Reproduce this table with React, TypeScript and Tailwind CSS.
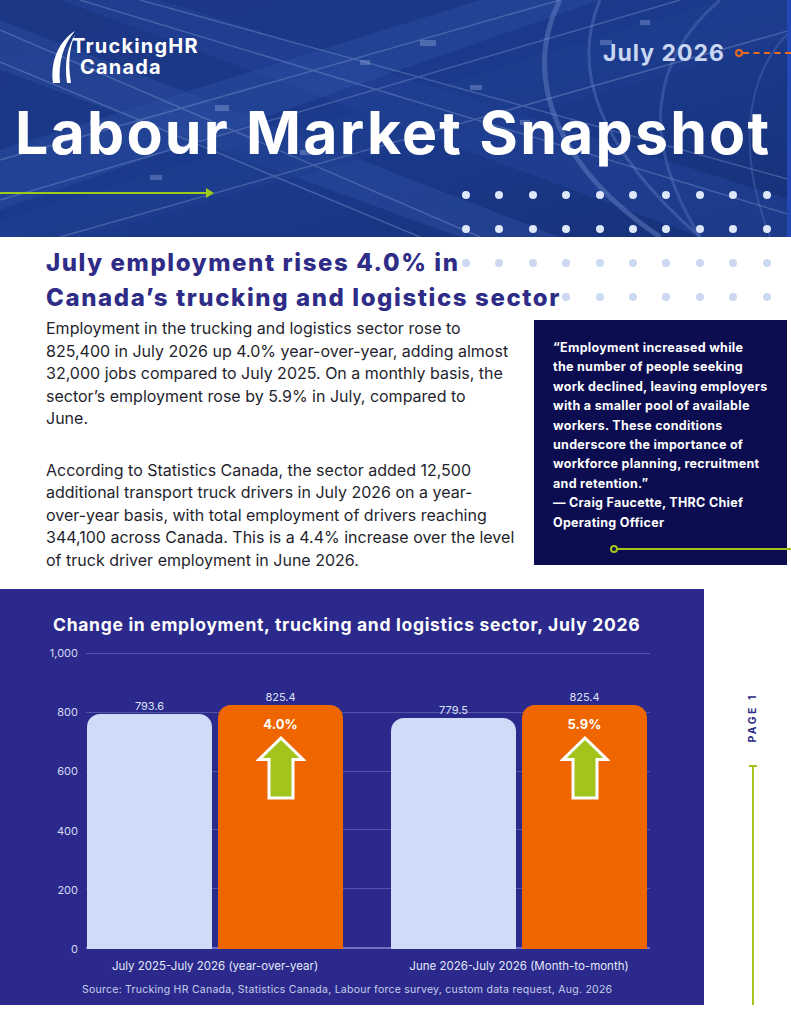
const bars = [
  { label: 'July 2025-July 2026 (year-over-year)', prev: 793.6, curr: 825.4, pct: '4.0%' },
  { label: 'June 2026-July 2026 (Month-to-month)', prev: 779.5, curr: 825.4, pct: '5.9%' },
]

const ticks = ['1,000', '800', '600', '400', '200', '0']
const plotH = 296

function HeaderBackdrop() {
  return (
    <svg className="absolute inset-0 h-full w-full" viewBox="0 0 791 237" preserveAspectRatio="none">
      <defs>
        <linearGradient id="hb" x1="0" y1="0" x2="1" y2="1">
          <stop offset="0" stopColor="#1c3682" />
          <stop offset="0.5" stopColor="#1a3a8c" />
          <stop offset="1" stopColor="#173178" />
        </linearGradient>
      </defs>
      <rect width="791" height="237" fill="url(#hb)" />
      {/* highway going down-right */}
      <polygon points="0,20 0,70 460,237 560,237" fill="#2a4a9c" opacity="0.55" />
      <polygon points="60,0 160,0 791,200 791,237 700,237" fill="#24449a" opacity="0.5" />
      {/* highway going up-right */}
      <polygon points="0,150 0,210 600,0 480,0" fill="#2c4fa2" opacity="0.45" />
      <polygon points="0,220 0,237 80,237 791,40 791,0 720,0" fill="#1e3d8e" opacity="0.6" />
      {/* ramps on right */}
      <path d="M560 0 C 520 80 560 170 660 237" stroke="#6a86c8" strokeWidth="5" fill="none" opacity="0.45" />
      <path d="M600 0 C 570 70 600 150 700 237" stroke="#6a86c8" strokeWidth="3" fill="none" opacity="0.35" />
      <path d="M720 0 C 650 60 640 140 700 237" stroke="#5b78bc" strokeWidth="3" fill="none" opacity="0.4" />
      <path d="M791 30 C 740 80 740 160 770 237" stroke="#5b78bc" strokeWidth="2" fill="none" opacity="0.35" />
      <g stroke="#8aa2d6" strokeWidth="1.5" opacity="0.35">
        <line x1="0" y1="30" x2="480" y2="237" />
        <line x1="0" y1="62" x2="420" y2="237" />
        <line x1="80" y1="0" x2="791" y2="215" />
        <line x1="140" y1="0" x2="791" y2="180" />
        <line x1="0" y1="160" x2="560" y2="0" />
        <line x1="0" y1="200" x2="680" y2="0" />
        <line x1="60" y1="237" x2="791" y2="30" />
      </g>
      <g fill="#9fb4e2" opacity="0.35">
        <rect x="215" y="105" width="14" height="6" />
        <rect x="300" y="150" width="10" height="5" />
        <rect x="420" y="40" width="16" height="6" />
        <rect x="470" y="85" width="12" height="5" />
        <rect x="360" y="60" width="10" height="5" />
        <rect x="520" y="120" width="10" height="5" />
        <rect x="150" y="175" width="12" height="5" />
        <rect x="90" y="120" width="10" height="5" />
        <rect x="600" y="40" width="12" height="5" />
        <rect x="640" y="20" width="10" height="5" />
      </g>
      <rect x="787" y="0" width="4" height="237" fill="#2448b4" />
    </svg>
  )
}

function Logo() {
  return (
    <div className="flex items-start">
      <svg width="30" height="54" viewBox="0 0 30 54" className="mt-[1px]">
        <path d="M27 1 C 12 10 2 30 5 53 L 12 53 C 10 33 15 15 27 1 Z" fill="#ffffff" />
        <path d="M27 5 C 20 16 16 32 19 53 L 23 53 C 20 34 21 19 27 5 Z" fill="#ffffff" />
      </svg>
      <div className="ml-[-6px] mt-[9px] flex flex-col gap-[5px] text-white font-bold">
        <span className="text-[20px] leading-[16px] tracking-[1.2px]">TruckingHR</span>
        <span className="ml-[8px] text-[20px] leading-[16px] tracking-[1.2px]">Canada</span>
      </div>
    </div>
  )
}

function UpArrow() {
  return (
    <svg width="50" height="64" viewBox="0 0 50 64">
      <polygon
        points="25,2 47,23.5 37,23.5 37,62 13,62 13,23.5 3,23.5"
        fill="#a3c41a"
        stroke="#ffffff"
        strokeWidth="3"
        strokeLinejoin="miter"
      />
    </svg>
  )
}

function Dots() {
  const cols = Array.from({ length: 10 })
  return (
    <div className="pointer-events-none absolute left-[462px] top-[191px] flex flex-col gap-y-[26px]">
      {[0, 1, 2, 3].map((row) => (
        <div key={row} className="flex gap-x-[25.4px]">
          {cols.map((_, i) => (
            <span
              key={i}
              className={
                row < 2
                  ? 'h-[8px] w-[8px] rounded-full bg-[#dfe7fb]'
                  : row === 3 && i < 3
                    ? 'h-[8px] w-[8px] rounded-full bg-transparent'
                    : 'h-[8px] w-[8px] rounded-full bg-[#cdd8f2]'
              }
            />
          ))}
        </div>
      ))}
    </div>
  )
}

function Chart() {
  return (
    <div className="h-[416px] w-[704px] bg-[#2b2a8c] pt-[24px]">
      <h2 className="pl-[53px] text-[17.5px] font-bold leading-[24px] tracking-[0.7px] text-white">
        Change in employment, trucking and logistics sector, July 2026
      </h2>

      <div className="mt-[16px] flex">
        <div className="-mt-[7px] flex h-[310px] w-[78px] flex-col items-end justify-between text-[11px] leading-[14px] text-[#d3d9f1]">
          {ticks.map((t) => (
            <span key={t}>{t}</span>
          ))}
        </div>

        <div className="relative ml-[8px] h-[296px] w-[564px]">
          <div className="flex h-full flex-col justify-between">
            {ticks.map((t, i) => (
              <div key={t} className={i === ticks.length - 1 ? 'h-[2px] bg-[#6f70c2]' : 'h-[1px] bg-[#5152a8]'} />
            ))}
          </div>

          <div className="absolute inset-0 flex items-end gap-[48px] pl-[1px]">
            {bars.map((b) => (
              <div key={b.label} className="flex items-end gap-[6px]">
                <div className="flex w-[125px] flex-col items-center">
                  <span className="mb-[1px] text-[11px] leading-[13px] text-[#dce2f6]">{b.prev}</span>
                  <div className="w-full rounded-t-[13px] bg-[#cfdcf7]" style={{ height: (b.prev / 1000) * plotH }} />
                </div>
                <div className="flex w-[125px] flex-col items-center">
                  <span className="mb-[1px] text-[11px] leading-[13px] text-[#dce2f6]">{b.curr}</span>
                  <div
                    className="flex w-full flex-col items-center rounded-t-[13px] bg-[#ef6600] pt-[11px]"
                    style={{ height: (b.curr / 1000) * plotH }}
                  >
                    <span className="text-[13px] font-bold leading-[16px] text-white">{b.pct}</span>
                    <div className="mt-[4px]">
                      <UpArrow />
                    </div>
                  </div>
                </div>
              </div>
            ))}
          </div>
        </div>
      </div>

      <div className="mt-[3px] flex gap-[48px] pl-[87px]">
        {bars.map((b) => (
          <span key={b.label} className="w-[256px] text-center text-[11.5px] leading-[14px] text-[#e3e8f8]">
            {b.label}
          </span>
        ))}
      </div>

      <p className="mt-[11px] pl-[82px] text-[10.5px] leading-[12px] tracking-[0.25px] text-[#c7cdea]">
        Source: Trucking HR Canada, Statistics Canada, Labour force survey, custom data request, Aug. 2026
      </p>
    </div>
  )
}

export default function App() {
  return (
    <div className="relative h-[1024px] w-[791px] overflow-hidden bg-white font-['Inter','Liberation_Sans',sans-serif]">
      <header className="relative h-[237px] overflow-hidden">
        <HeaderBackdrop />
        <div className="relative flex h-full flex-col">
          <div className="flex items-start justify-between pl-[48px] pt-[29px]">
            <Logo />
            <div className="mt-[10px] flex items-center">
              <span className="text-[23px] font-bold leading-[28px] tracking-[1px] text-[#c9d7f2]">July 2026</span>
              <span className="ml-[10px] h-[8px] w-[8px] rounded-full border-[2px] border-[#ec6a1e]" />
              <span className="w-[48px] border-t-[2px] border-dashed border-[#ec6a1e]" />
            </div>
          </div>
          <h1 className="mt-[17px] pl-[15px] text-[59px] font-bold leading-[64px] tracking-[2.2px] text-white">
            Labour Market Snapshot
          </h1>
          <div className="mt-[23px] flex w-[214px] items-center">
            <div className="h-[2.5px] flex-1 bg-[#9ccb1c]" />
            <svg width="8" height="10" viewBox="0 0 8 10" className="-ml-[1px]">
              <polygon points="0,0 8,5 0,10" fill="#9ccb1c" />
            </svg>
          </div>
        </div>
      </header>

      <Dots />

      <section className="relative h-[352px] pl-[46px] pt-[8px]">
        <h2 className="text-[24px] font-extrabold leading-[35px] tracking-[1.6px] text-[#2e2c86]">
          July employment rises 4.0% in
          <br />
          Canada’s trucking and logistics sector
        </h2>

        <div className="mt-[2px] flex">
          <div className="w-[488px] text-[16px] leading-[22.5px] text-[#1f1f2e]">
            <p>
              Employment in the trucking and logistics sector rose to
              <br />
              825,400 in July 2026 up 4.0% year-over-year, adding almost
              <br />
              32,000 jobs compared to July 2025. On a monthly basis, the
              <br />
              sector’s employment rose by 5.9% in July, compared to
              <br />
              June.
            </p>
            <p className="mt-[29px]">
              According to Statistics Canada, the sector added 12,500
              <br />
              additional transport truck drivers in July 2026 on a year-
              <br />
              over-year basis, with total employment of drivers reaching
              <br />
              344,100 across Canada. This is a 4.4% increase over the level
              <br />
              of truck driver employment in June 2026.
            </p>
          </div>

          <div className="relative mt-[3px] h-[245px] w-[253px] bg-[#0c0d50] pl-[19px] pt-[18px]">
            <p className="text-[12.5px] font-bold leading-[19.4px] tracking-[0.3px] text-white">
              “Employment increased while
              <br />
              the number of people seeking
              <br />
              work declined, leaving employers
              <br />
              with a smaller pool of available
              <br />
              workers. These conditions
              <br />
              underscore the importance of
              <br />
              workforce planning, recruitment
              <br />
              and retention.”
              <br />
              — Craig Faucette, THRC Chief
              <br />
              Operating Officer
            </p>
            <div className="absolute left-[76px] right-[-4px] top-[225px] flex items-center">
              <span className="h-[8px] w-[8px] rounded-full border-[2px] border-[#a3c41a]" />
              <span className="h-[2px] flex-1 bg-[#a3c41a]" />
            </div>
          </div>
        </div>
      </section>

      <div className="flex">
        <Chart />
        <div className="flex flex-1 flex-col items-center pl-[10px]">
          <span className="mt-[104px] rotate-180 text-[10.5px] font-bold tracking-[2.5px] text-[#2e2c86] [writing-mode:vertical-rl]">
            PAGE 1
          </span>
          <div className="mt-[22px] flex flex-1 flex-col items-center">
            <span className="h-[2px] w-[8px] bg-[#a3c41a]" />
            <span className="w-[2px] flex-1 bg-[#a3c41a]" />
          </div>
        </div>
      </div>
    </div>
  )
}
